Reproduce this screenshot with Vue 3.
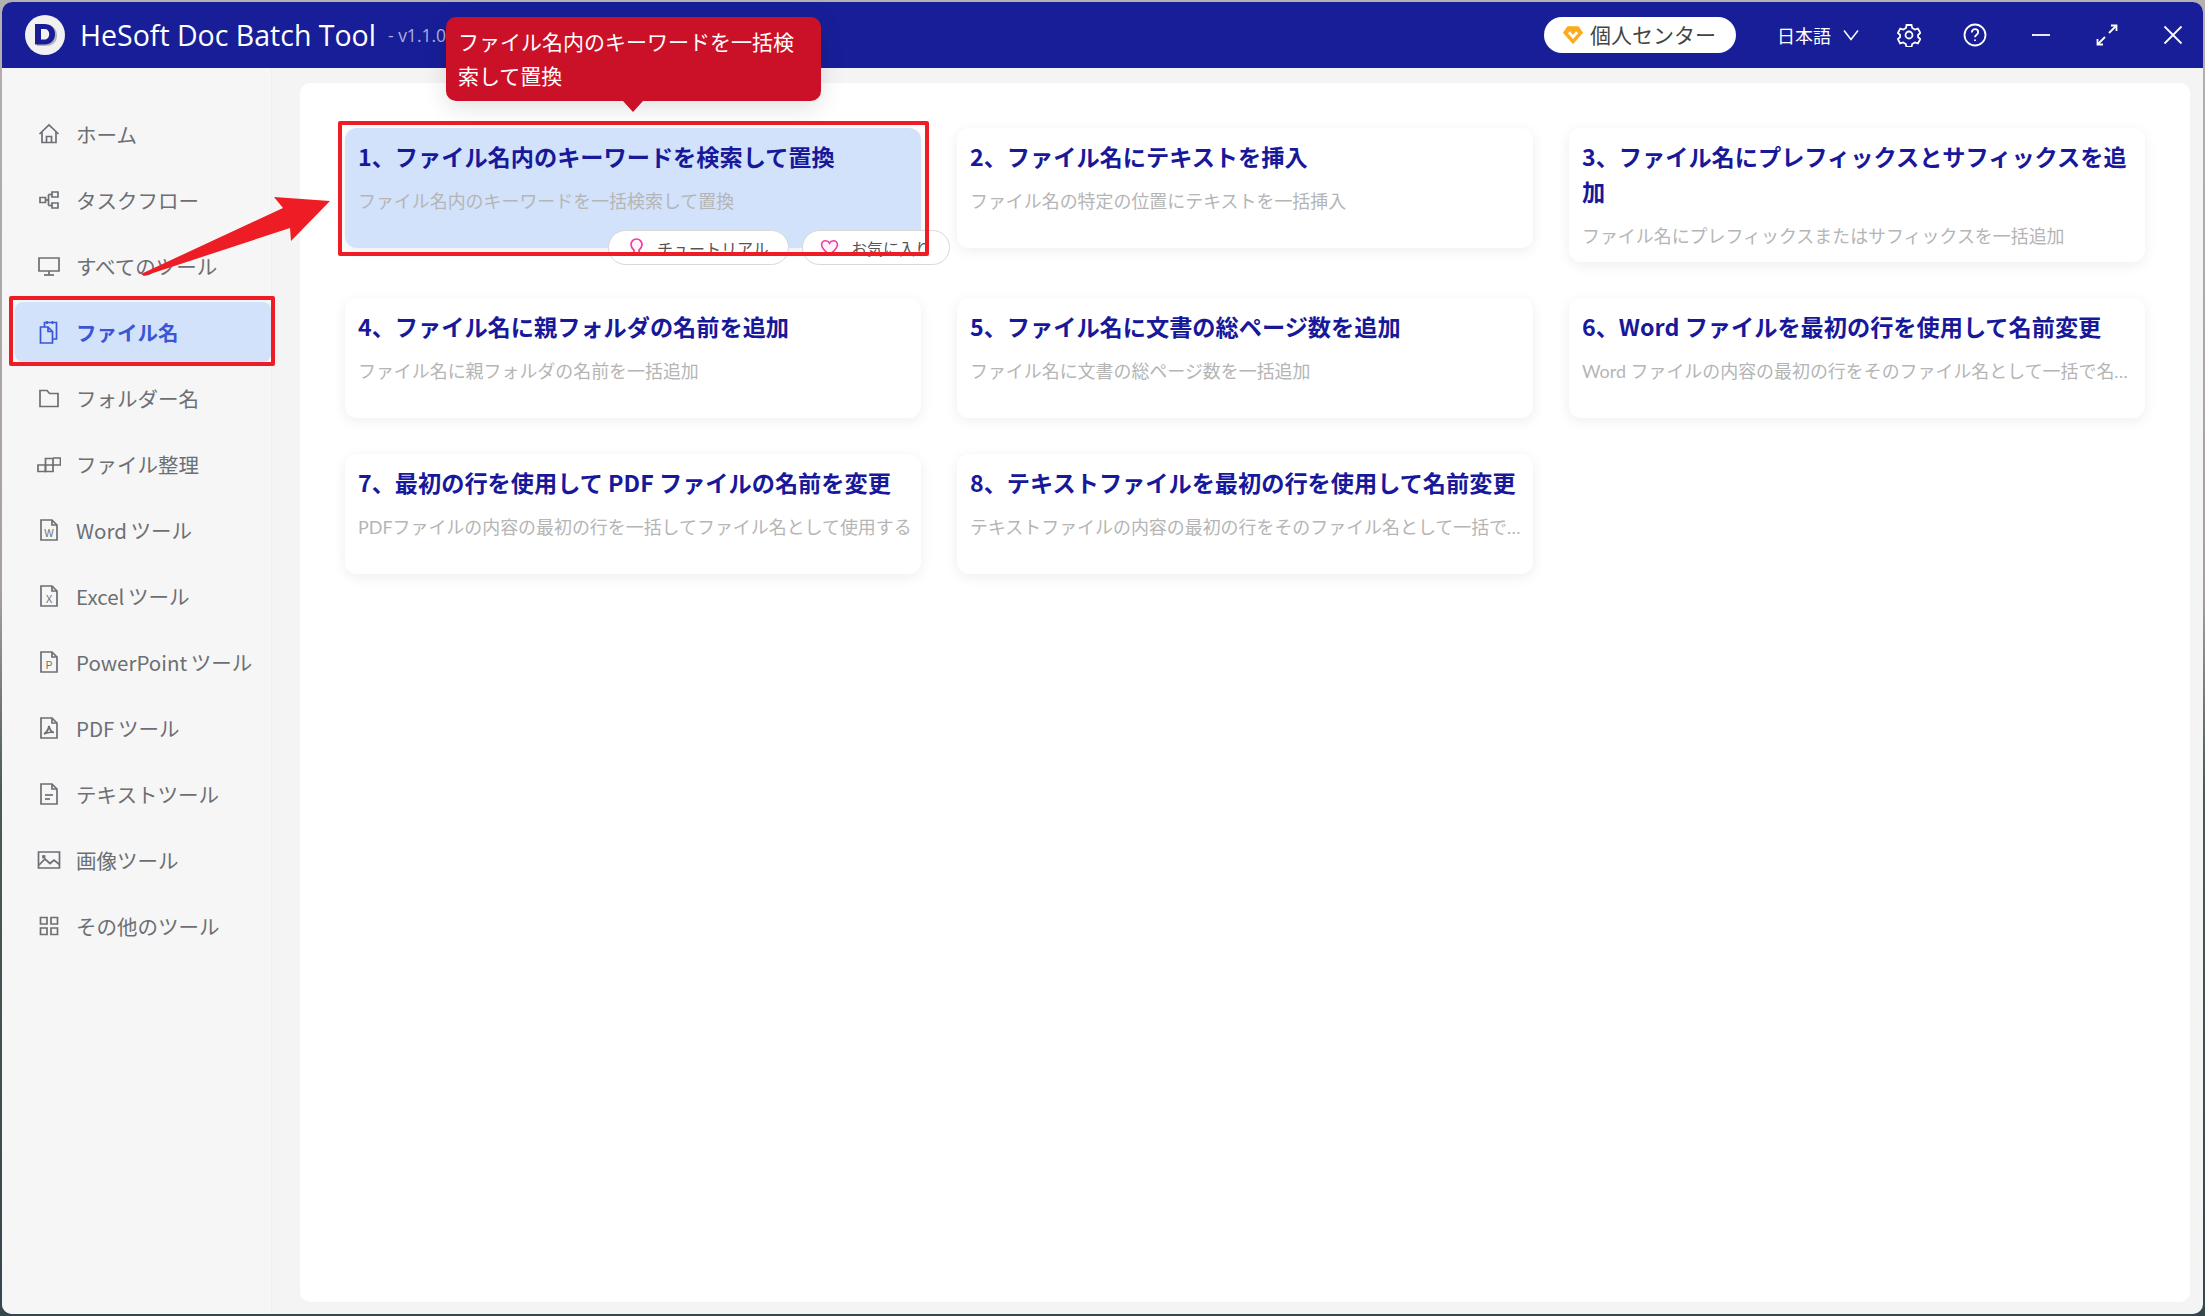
<template>
  <div class="window">
    <header class="topbar">
      <svg class="logo" viewBox="0 0 40 40">
        <circle cx="20" cy="20" r="20" fill="#f1f1f1" />
        <path d="M12 10h9c7 0 11 4.500 11 10.500S28 31 21 31h-9z" fill="#b5b5b5" />
        <path d="M10 9h9.500c6.500 0 10.500 4 10.500 10s-4 10.500-10.500 10.500H10z" fill="#181c96" />
        <path d="M16 14h3.500c3 0 4.700 2 4.700 5s-1.700 5.500-4.700 5.500H16z" fill="#f1f1f1" />
      </svg>
      <span class="app-name">HeSoft Doc Batch Tool</span>
      <span class="version">- v1.1.0</span>
      <div class="top-right">
        <div class="user-pill">
          <svg class="gem" viewBox="0 0 24 24">
            <path d="M6 2.500h12l5 7L12 22 1 9.500z" fill="#fbab1c" />
            <path d="M7.500 9l4.500 5 4.500-5" fill="none" stroke="#fff" stroke-width="3" />
          </svg>
          <span class="pill-label">個人センター</span>
        </div>
        <span class="lang">日本語</span>
        <svg class="chevron" viewBox="0 0 18 18"><path d="M2 4.500l7 9 7-9" /></svg>
        <div class="win-icons">
          <svg v-for="icon in windowIcons" :key="icon.name" class="win-icon" viewBox="0 0 24 24">
            <path v-for="d in icon.paths" :key="d" :d="d" />
            <circle v-if="icon.circle" cx="12" cy="12" :r="icon.circle" />
          </svg>
        </div>
      </div>
    </header>

    <div class="content">
      <nav class="sidebar">
        <div
          v-for="item in navItems"
          :key="item.label"
          class="nav-item"
          :class="{ active: item.active }"
        >
          <svg class="nav-icon" viewBox="0 0 24 24">
            <path v-for="d in item.paths" :key="d" :d="d" />
            <text v-if="item.letter" x="12" y="18.500" class="doc-letter">{{ item.letter }}</text>
          </svg>
          <span>{{ item.label }}</span>
          <div v-if="item.active" class="mark mark-nav"></div>
        </div>
      </nav>

      <main class="panel">
        <div class="card-grid">
          <section
            v-for="card in cards"
            :key="card.title"
            class="card"
            :class="{ selected: card.selected }"
          >
            <h3 class="card-title">{{ card.title }}</h3>
            <p class="card-desc">{{ card.desc }}</p>

            <template v-if="card.selected">
              <div class="card-actions">
                <button class="action tutorial">
                  <svg viewBox="0 0 20 24">
                    <path d="M10 2a6.500 6.500 0 0 0-6.500 6.500c0 3 1.800 5 3.500 6.500v5h6v-5c1.700-1.500 3.500-3.500 3.500-6.500A6.500 6.500 0 0 0 10 2z" />
                  </svg>
                  <span>チュートリアル</span>
                </button>
                <button class="action favorite">
                  <svg viewBox="0 0 24 24">
                    <path d="M12 21C6 16.500 2 13 2 8.500 2 5.500 4.300 3.500 7 3.500c2 0 4 1 5 3 1-2 3-3 5-3 2.700 0 5 2 5 5C22 13 18 16.500 12 21z" />
                  </svg>
                  <span>お気に入り</span>
                </button>
              </div>
              <div class="mark mark-card"></div>
              <div class="tooltip">ファイル名内のキーワードを一括検索して置換</div>
            </template>
          </section>
        </div>
      </main>
    </div>

    <svg class="arrow" viewBox="0 0 200 90">
      <path d="M2 77 144 11 135 0 191 4 152 44 151 31 5 79z" />
    </svg>
  </div>
</template>

<script setup>
const docBase = ['M4 2h11l5 5v15H4z', 'M15 2v5h5']

const navItems = [
  { label: 'ホーム', paths: ['M2.500 12 12 3l9.500 9', 'M5 10v10.500h14V10', 'M9.500 20.500v-6h5v6'] },
  {
    label: 'タスクフロー',
    paths: ['M3 9.500h5.500v5H3z', 'M15 4h6v5h-6z', 'M15 15h6v5h-6z', 'M8.500 12h3', 'M11.500 6.500v11', 'M11.500 6.500H15', 'M11.500 17.500H15'],
  },
  { label: 'すべてのツール', paths: ['M2 4h20v13H2z', 'M12 17v4', 'M7 21h10'] },
  {
    label: 'ファイル名',
    active: true,
    paths: ['M3.500 7H11l4.500 4.500V23H3.500z', 'M11 7v4.500h4.500', 'M7.500 7V2.500h12V19h-4', 'M10 1v3', 'M15.500 1v3'],
  },
  { label: 'フォルダー名', paths: ['M3 4.500h7l2.500 3H21v13H3z'] },
  { label: 'ファイル整理', paths: ['M1 13h7.500v6.500H1z', 'M8.500 13H16v6.500H8.500z', 'M8.500 13V6.500H16V13', 'M16 6h7.500v7H16'] },
  { label: 'Word ツール', paths: docBase, letter: 'W' },
  { label: 'Excel ツール', paths: docBase, letter: 'X' },
  { label: 'PowerPoint ツール', paths: docBase, letter: 'P' },
  { label: 'PDF ツール', paths: [...docBase, 'M12 10c-.5 3-2 6-5 8 3-1.500 7-2 10-1.500-3-.5-4.500-3.500-5-6.500z'] },
  { label: 'テキストツール', paths: [...docBase, 'M8 13h8', 'M8 17h5'] },
  { label: '画像ツール', paths: ['M1.500 4h21v16h-21z', 'M2 17l6-6 5 4.500 4-3.500 5.500 4.500', 'M6 8h1.500v1.500H6z'] },
  { label: 'その他のツール', paths: ['M3.500 3.500h6.500v6.500H3.500z', 'M14 3.500h6.500v6.500H14z', 'M3.500 14h6.500v6.500H3.500z', 'M14 14h6.500v6.500H14z'] },
]

const cards = [
  { title: '1、ファイル名内のキーワードを検索して置換', desc: 'ファイル名内のキーワードを一括検索して置換', selected: true },
  { title: '2、ファイル名にテキストを挿入', desc: 'ファイル名の特定の位置にテキストを一括挿入' },
  { title: '3、ファイル名にプレフィックスとサフィックスを追加', desc: 'ファイル名にプレフィックスまたはサフィックスを一括追加' },
  { title: '4、ファイル名に親フォルダの名前を追加', desc: 'ファイル名に親フォルダの名前を一括追加' },
  { title: '5、ファイル名に文書の総ページ数を追加', desc: 'ファイル名に文書の総ページ数を一括追加' },
  { title: '6、Word ファイルを最初の行を使用して名前変更', desc: 'Word ファイルの内容の最初の行をそのファイル名として一括で名前変更' },
  { title: '7、最初の行を使用して PDF ファイルの名前を変更', desc: 'PDFファイルの内容の最初の行を一括してファイル名として使用する' },
  { title: '8、テキストファイルを最初の行を使用して名前変更', desc: 'テキストファイルの内容の最初の行をそのファイル名として一括で名前変更' },
]

const windowIcons = [
  {
    name: 'settings',
    circle: 3.5,
    paths: ['M9.500 2h5l.7 3 2.700 1.500 3-.9 2.400 4.300-2.200 2.100v2l2.200 2.100-2.400 4.300-3-.9-2.700 1.500-.7 3h-5l-.7-3-2.700-1.500-3 .9L.900 16.100l2.200-2.100v-2L.900 9.900l2.400-4.300 3 .9L9 5z'],
  },
  {
    name: 'help',
    circle: 10.5,
    paths: ['M8.800 9.500c0-2 1.400-3.300 3.200-3.300s3.200 1.200 3.200 3c0 2.500-3.200 2.500-3.200 5', 'M12 16.500v1.500'],
  },
  { name: 'minimize', paths: ['M3 12h18'] },
  { name: 'maximize', paths: ['M14 10l7-7', 'M16 2.500h5.500V8', 'M10 14l-7 7', 'M2.500 16v5.500H8'] },
  { name: 'close', paths: ['M3.500 3.500l17 17', 'M20.500 3.500l-17 17'] },
]
</script>

<style>
body {
  background: linear-gradient(180deg, #b4b0ae 0%, #a79f9d 45%, #4a5a5a 60%, #34474a 100%);
}
</style>

<style scoped>
.window {
  position: relative;
  box-sizing: border-box;
  width: 2201px;
  height: 1312px;
  margin: 2px;
  display: flex;
  flex-direction: column;
  background: #f4f4f4;
  border-radius: 10px;
  font-family: "Noto Sans CJK JP", sans-serif;
}

.topbar {
  flex: none;
  height: 66px;
  display: flex;
  align-items: center;
  padding-left: 23px;
  background: #181e97;
  border-radius: 10px 10px 0 0;
  color: #fff;
}

.logo {
  width: 40px;
  height: 40px;
  flex: none;
}

.app-name {
  margin-left: 15px;
  margin-top: -1px;
  font-family: "Open Sans", sans-serif;
  font-size: 28.500px;
  line-height: 40px;
}

.version {
  margin-left: 12px;
  font-family: "Open Sans", sans-serif;
  font-size: 17.500px;
  color: #aeb0d8;
}

.top-right {
  margin-left: auto;
  display: flex;
  align-items: center;
  padding-right: 18px;
}

.user-pill {
  width: 192px;
  height: 36px;
  box-sizing: border-box;
  display: flex;
  align-items: center;
  padding-left: 18px;
  gap: 6px;
  background: #fff;
  border-radius: 18px;
  color: #444;
  font-size: 21px;
}

.pill-label {
  margin-top: -2px;
}

.gem {
  width: 22px;
  height: 22px;
}

.lang {
  margin-left: 41px;
  margin-top: -1px;
  font-size: 18px;
}

.chevron {
  width: 18px;
  height: 18px;
  margin-left: 11px;
  fill: none;
  stroke: #fff;
  stroke-width: 1.500;
}

.win-icons {
  display: flex;
  gap: 42px;
  margin-left: 37px;
}

.win-icon {
  width: 24px;
  height: 24px;
  fill: none;
  stroke: #fff;
  stroke-width: 1.800;
}

.content {
  flex: 1;
  min-height: 0;
  display: flex;
  padding: 0 13px 12px 0;
}

.sidebar {
  flex: none;
  width: 270px;
  box-sizing: border-box;
  margin-bottom: -12px;
  padding: 36px 0 0 13px;
  display: flex;
  flex-direction: column;
  gap: 6px;
  background: #f6f6f6;
  border-right: 1px solid #f0f0f0;
  border-bottom-left-radius: 10px;
}

.nav-item {
  position: relative;
  height: 60px;
  display: flex;
  align-items: center;
  gap: 15px;
  padding-left: 22px;
  border-radius: 8px;
  font-size: 20.500px;
  word-spacing: -1px;
  color: #6c6f73;
}

.nav-item.active {
  background: #d2e2fb;
  color: #3a56d4;
  font-weight: 700;
}

.nav-icon {
  width: 24px;
  height: 24px;
  flex: none;
  fill: none;
  stroke: currentColor;
  stroke-width: 1.700;
}

.doc-letter {
  font-family: "Liberation Sans", sans-serif;
  font-size: 10px;
  fill: currentColor;
  stroke: none;
  text-anchor: middle;
}

.panel {
  flex: 1;
  margin: 15px 0 0 28px;
  padding: 45px;
  background: #fff;
  border-radius: 10px;
}

.card-grid {
  display: grid;
  grid-template-columns: repeat(3, minmax(0, 1fr));
  gap: 36px;
  align-items: start;
}

.card {
  position: relative;
  box-sizing: border-box;
  min-height: 120px;
  padding: 10.500px 13px 13.500px;
  border-radius: 12px;
  background: #fff;
  box-shadow: 0 3px 14px rgb(0 0 0 / 0.07);
}

.card.selected {
  background: #d2e2fb;
}

.card-title {
  margin: 0;
  font-size: 23.200px;
  line-height: 35px;
  font-weight: 700;
  color: #18189a;
}

.card-desc {
  margin: 15px -6px 0 0;
  font-family: Lato, "Noto Sans CJK JP", sans-serif;
  font-size: 17.950px;
  line-height: 25px;
  color: #b5b5b5;
  white-space: nowrap;
  overflow: hidden;
  text-overflow: ellipsis;
}

.card-actions {
  position: absolute;
  top: 102px;
  right: -29px;
  display: flex;
  gap: 13px;
}

.action {
  height: 35px;
  box-sizing: border-box;
  display: flex;
  align-items: center;
  padding: 0;
  background: #fff;
  border: 1px solid #d8d8d8;
  border-radius: 18px;
  font-family: inherit;
  font-size: 16px;
  color: #555;
}

.action svg {
  flex: none;
  fill: #fff4fa;
  stroke: #ef3aa0;
  stroke-width: 2;
}

.tutorial {
  width: 181px;
  padding-left: 19px;
  gap: 12px;
}

.tutorial svg {
  width: 17px;
  height: 21px;
}

.favorite {
  width: 148px;
  padding-left: 17px;
  gap: 12px;
}

.favorite svg {
  width: 19px;
  height: 19px;
}

.mark {
  position: absolute;
  box-sizing: border-box;
  border: 4px solid #ee1c25;
  border-radius: 2px;
  pointer-events: none;
}

.mark-nav {
  inset: -6px -4px -4px -6px;
}

.mark-card {
  inset: -7px -8px -8px -7px;
}

.tooltip {
  position: absolute;
  left: 101px;
  top: -111px;
  box-sizing: border-box;
  width: 375px;
  height: 84px;
  padding: 7px 12px;
  background: #cb1128;
  border-radius: 10px;
  color: #fff;
  font-size: 21px;
  line-height: 34px;
  box-shadow: 0 6px 24px rgb(0 0 0 / 0.12);
}

.tooltip::after {
  content: "";
  position: absolute;
  left: 177px;
  bottom: -11px;
  width: 0;
  height: 0;
  border-left: 10px solid transparent;
  border-right: 10px solid transparent;
  border-top: 11px solid #cb1128;
}

.arrow {
  position: absolute;
  left: 137px;
  top: 195px;
  width: 200px;
  height: 90px;
  fill: #ee1c25;
}
</style>
